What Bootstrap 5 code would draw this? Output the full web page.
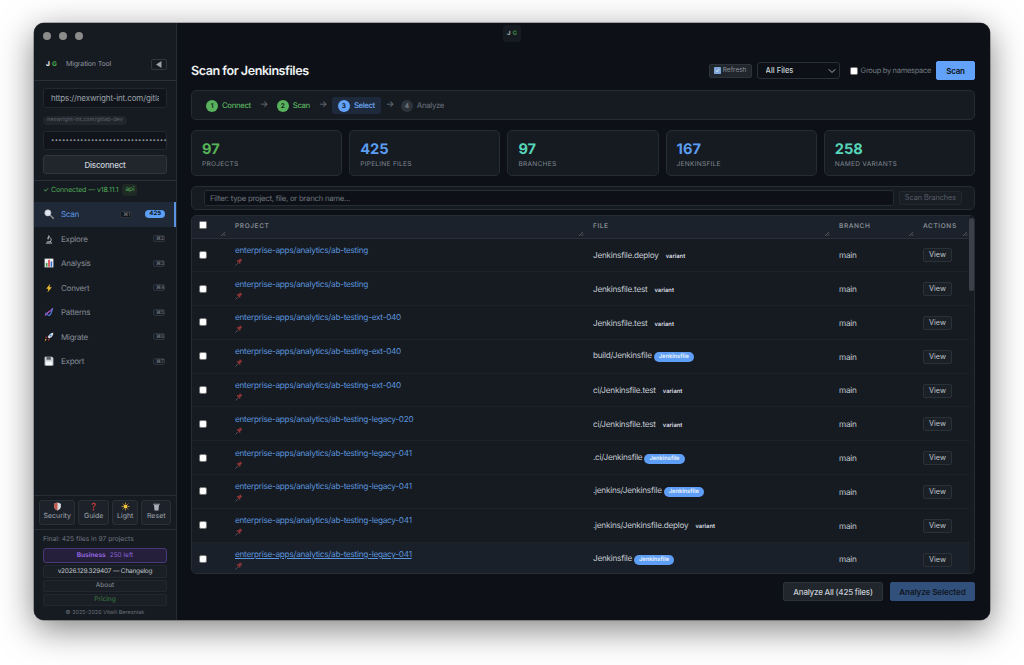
<!doctype html>
<html lang="en">
<head>
<meta charset="utf-8">
<title>Migration Tool</title>
<link href="https://cdn.jsdelivr.net/npm/bootstrap@5.3.0/dist/css/bootstrap.min.css" rel="stylesheet">
<style>
html,body{height:100%;background:#fff;overflow:hidden}
body{font-family:Inter,"Liberation Sans",sans-serif;font-size:8px;padding:23px 34px 45px;color:#c9d1d9;text-rendering:geometricPrecision}
.appwin{height:597px;border-radius:10px;overflow:hidden;box-shadow:0 9px 34px rgba(0,0,0,.5),0 0 0 .5px rgba(0,0,0,.5);background:#0d1117;position:relative}
.side{width:143px;flex:none;background:#161b22;border-right:1px solid #262c35}
.side>*{flex-shrink:0}
.dots{height:27px;padding:9px 0 0 9px}
.dots i{width:8px;height:8px;border-radius:50%;background:#8b8b8b}
.brandrow{height:31px;padding:0 9px 1px 9px;border-bottom:1px solid #2a303a;font-size:7px;letter-spacing:-.15px;color:#9198a1}
.logo{font-size:6.5px;font-weight:800;letter-spacing:.4px;width:23px;padding-left:3px}
.logo b{color:#3fa04a;font-weight:800}
.logo span{color:#eee}
.collapse-btn{width:16px;height:11px;border:1px solid #30363f;border-radius:2px;color:#9ba2aa}
.connbox{padding:7px 9px 6px;border-bottom:1px solid #2a303a}
.field-d{display:block;width:100%;background:#11151b;border:1px solid #22282f;border-radius:3px;color:#9ca3ab;font-size:8px;letter-spacing:-.15px;height:20px;padding:0 7px;white-space:nowrap;overflow:hidden;box-shadow:none}
.field-d:focus{background:#11151b;color:#9ca3ab}
.chip{display:block;width:fit-content;background:#21262d;color:#5b626b;font-size:5.5px;padding:0 4px;border-radius:6px;margin:8px 0 6px;line-height:9px;height:9px}
.pwd{letter-spacing:.25px;font-size:6px;color:#8a9099;height:19px;line-height:17px;padding:0 7px}
.disc{width:100%;height:19px;padding:0;margin-top:5px;background:#21262d;border:1px solid #30363d;color:#c9d1d9;font-size:8px;letter-spacing:-.2px;font-weight:500;border-radius:3px}
.connst{height:21px;padding:0 0 3px 9px;color:#4fa754;font-size:7px;letter-spacing:-.1px;gap:3px}
.connst span{background:#1f2a24;color:#4fa754;padding:1px 3px;border-radius:3px;font-size:6.5px;margin-left:1px}
.navlist{padding:0}
.navit{height:24.5px;padding:0 9px 0 10px;font-size:8px;letter-spacing:-.25px;color:#858c95;gap:7px;border-right:2px solid transparent}
.navit svg{width:10px;height:10px;flex:none}
.navit.on{background:#1f2937;color:#5d99e6;border-right-color:#5a94e0}
.kbd-k{margin-left:auto;border:1px solid #2c323a;background:#1a1f26;font-size:5px;letter-spacing:0;color:#767d86;border-radius:2px;padding:0 2px;line-height:6px;width:12px;text-align:center;height:7px}
.navit.on .kbd-k{background:#14181d;margin-right:6px}
.cnt{background:#5c9ff5;color:#0d1117;font-size:6px;letter-spacing:0;font-weight:700;border-radius:6px;padding:1px 4px;line-height:6px}
.toolsrow{padding:4px 5px 4px;gap:3px;border-top:1px solid #262c35;border-bottom:1px solid #262c35}
.toolbtn{height:25px;background:#1d222a;border:1px solid #2a3038;border-radius:3px;color:#a0a7af;font-size:7px;flex-direction:column;line-height:8px;padding:1px 0 0}
.toolbtn svg{width:9px;height:9px;margin-bottom:1px}
.sidefoot{padding:4px 9px 3px;gap:2px}
.finalt{color:#6f7680;font-size:6.7px;height:10px;margin-bottom:2px}
.plan{height:15px;background:#261f3c;border:1px solid #483a76;border-radius:3px;color:#8a63d2;font-size:6.5px;gap:4px}
.plan b{color:#8f63dc}
.linkb{height:13px;border:1px solid #232830;background:#1a1f26;border-radius:2px;font-size:6.5px;color:#8b929a}
.linkb.slim{height:12px}
.linkb.ver{color:#c0c6cc;letter-spacing:-.2px}
.linkb.pri{color:#3f7f45}
.copyr{color:#6a7078;font-size:5.5px;line-height:8px;margin-top:1px;text-align:center}
.mainp{min-width:0;padding:38px 15px 19px 14px;gap:10px;background:#0d1117}
.floatlogo{position:absolute;left:469px;top:2px;width:18px;height:17px;border-radius:3px;background:#161b22;font-size:6px;font-weight:800;color:#9aa}
.floatlogo b{color:#357a3c;font-weight:800;margin-left:2px}
.htop{height:19px}
.htitle{font-size:12.6px;letter-spacing:-.48px;font-weight:600;color:#eef1f4;margin:2px 0 0}
.refr{height:14px;width:43px;background:#21262d;border:1px solid #2d333b;border-radius:2px;font-size:6.5px;color:#8b929a;gap:2px;padding:0;margin-right:5px}
.refr svg{width:7px;height:7px}
.sel-d{width:83px;height:17px;padding:0 0 0 8px;font-size:7.5px;background-color:#0d1117;border:1px solid #2a3038;color:#c9d1d9;border-radius:3px;font-weight:500;background-size:8px 8px;background-position:right 3px center;background-image:url("data:image/svg+xml,%3csvg xmlns='http://www.w3.org/2000/svg' viewBox='0 0 16 16'%3e%3cpath fill='none' stroke='%23aab' stroke-linecap='round' stroke-linejoin='round' stroke-width='2' d='m2 5 6 6 6-6'/%3e%3c/svg%3e")}
.grp{margin-left:10px;margin-right:5px;font-size:7.5px;letter-spacing:-.3px;color:#717880;gap:3px}
.chk-d{width:8px;height:8px;margin:0;border-radius:1.5px;background-color:#fff;border:1px solid #767676;flex:none}
.scanb{width:39px;height:19px;padding:0;background:#62a2fb;border:1px solid #62a2fb;border-radius:2px;color:#0d1117;font-size:8px;letter-spacing:-.2px;font-weight:600}
.panel-d{background:#161b22;border:1px solid #262c35;border-radius:5px}
.stepb{height:30px;padding-left:10px;font-size:7.8px;letter-spacing:-.4px}
.stp{height:17px;gap:4px;padding:1px 4px 0;font-weight:500;color:#58ad5c;border-radius:3px}
.stp i{width:12px;height:12px;border-radius:50%;background:#58b25c;color:#0d1117;font-size:6.5px;letter-spacing:0;font-style:normal;font-weight:600;text-align:center;line-height:12px}
.stp.cur{background:#1e2a3c;color:#6aa5f0;padding:1px 6px 0}
.stp.cur i{background:#62a2fb}
.stp.todo{color:#5f666f;margin-left:-2px}
.stp.todo i{background:#2d333b;color:#7d848c}
.arr{color:#6e757d;font-size:9px;width:18px;text-align:center;line-height:9px;margin-top:-1px}
.statgrid{gap:7px}
.statb{height:46px;padding:9px 10px 0;flex:1 1 0}
.statn{font-size:14.6px;font-weight:700;line-height:18px}
.statl{font-size:6.6px;color:#7f868e;letter-spacing:.25px;text-transform:uppercase;line-height:10px;margin-top:1px}
.cg{color:#56b356}.cb{color:#5a9df2}.ct{color:#56d4b8}
.filterb{height:24px;padding:0 12px}
.filt{flex:1;height:16px;background:#0d1117;border:1px solid #262c35;border-radius:3px;color:#6f767e;font-size:7.7px;letter-spacing:-.22px;padding:0 5px;line-height:15px;white-space:nowrap}
.sbr{width:63px;height:14px;margin-left:5px;padding:0;background:#1a1f26;border:1px solid #22272f;border-radius:2px;color:#585e66;font-size:7.3px;letter-spacing:-.05px}
.tblwrap{height:359px;overflow:hidden;position:relative}
.tbl-d{table-layout:fixed;width:778px;margin:0;--bs-table-bg:transparent;--bs-table-color:#c9d1d9;border-collapse:collapse}
.tbl-d th{height:22px;padding:1px 0 0 7px;background:#1c222b;font-size:6.5px;font-weight:600;letter-spacing:.6px;color:#848b93;text-transform:uppercase;border-bottom:1px solid #2a303a;position:relative;vertical-align:middle}
.tbl-d td{height:33.8px;padding:1px 0 0 7px;font-size:8.2px;letter-spacing:-.25px;border-bottom:1px solid #1d2229;vertical-align:middle;background:transparent;color:#c3cad1;line-height:1}
.tbl-d td.ckc,.tbl-d th.ckc{padding:0 0 0 7px}
.tbl-d th.ckc .chk-d{margin-top:-3px;display:block}
.grip{position:absolute;right:2px;bottom:2px;width:5px;height:4px}
.plink{color:#5b94dd;text-decoration:none;display:block;line-height:10px}
.hov{background:#1a2029}
.hov .plink{text-decoration:underline}
.pinic{width:8px;height:8px;display:block;margin-top:3px}
.tg-v{font-size:5.8px;letter-spacing:0;font-weight:600;color:#d7dbe0;margin-left:5px;vertical-align:0}
.tg-j{display:inline-block;background:#5e9ef6;color:#e8f1ff;font-size:5.8px;letter-spacing:-.05px;font-weight:600;border-radius:6px;padding:0 5px;line-height:10px;margin-left:2px;vertical-align:0}
.viewb{width:29px;height:14px;padding:0;background:#1b2027;border:1px solid #2b3139;border-radius:2px;color:#bcc3ca;font-size:7.3px;line-height:12px}
.sthumb{position:absolute;right:0;top:2px;width:5px;height:73px;background:#3b4149;border-radius:3px}
.ftbtn{height:19px;padding:0;border-radius:2px;font-size:8px;font-weight:500}
.anall{width:100px;background:#21262d;border:1px solid #2c323a;color:#c6ccd3;letter-spacing:-.2px}
.ansel{width:85px;background:#32507c;border:1px solid #32507c;color:#0f1620;margin-left:7px;font-weight:600;letter-spacing:-.05px}
</style>
</head>
<body>
<div class="appwin d-flex">
  <aside class="side d-flex flex-column">
    <div class="dots d-flex gap-1"><i class="d-block me-1"></i><i class="d-block me-1"></i><i class="d-block"></i></div>
    <div class="brandrow d-flex align-items-center">
      <div class="logo"><span>J</span> <b>G</b></div>
      <div class="flex-grow-1">Migration Tool</div>
      <div class="collapse-btn d-flex align-items-center justify-content-center"><svg width="6" height="7" viewBox="0 0 6 7"><path d="M5.5 0v7L0 3.5z" fill="#9ba2aa"/></svg></div>
    </div>
    <div class="connbox">
      <input class="form-control field-d" type="text" value="https://nexwright-int.com/gitlab-dev" aria-label="GitLab URL">
      <div class="chip">nexwright-int.com/gitlab-dev</div>
      <div class="field-d pwd">••••••••••••••••••••••••••••••••</div>
      <button class="btn disc" type="button">Disconnect</button>
    </div>
    <div class="connst d-flex align-items-center">✓ Connected — v18.11.1 <span>api</span></div>
    <nav class="navlist d-flex flex-column">
      <div class="navit on d-flex align-items-center"><svg viewBox="0 0 16 16"><path d="M10 10l5 5" stroke="#8a8a8a" stroke-width="2.4" stroke-linecap="round"/><circle cx="6.2" cy="6.2" r="5" fill="#dfe6ee" stroke="#aab" stroke-width="1"/></svg>Scan<span class="kbd-k">⌘1</span><span class="cnt">425</span></div>
      <div class="navit d-flex align-items-center"><svg viewBox="0 0 16 16"><path d="M3 14.5h10M5 12.5h6" stroke="#b5bcc4" stroke-width="1.6"/><path d="M7 2l2.5 1-2.5 6-2-1z" fill="#9aa2ab"/><path d="M9.5 5.5a4.5 4.5 0 0 1 .5 7" stroke="#ccd2d8" stroke-width="1.4" fill="none"/></svg>Explore<span class="kbd-k">⌘2</span></div>
      <div class="navit d-flex align-items-center"><svg viewBox="0 0 16 16"><rect x="1" y="1" width="14" height="14" fill="#eef0f2"/><rect x="3" y="8" width="2.5" height="6" fill="#2f9e44"/><rect x="6.8" y="3" width="2.5" height="11" fill="#d9363e"/><rect x="10.6" y="5.5" width="2.5" height="8.5" fill="#2b6cd4"/></svg>Analysis<span class="kbd-k">⌘3</span></div>
      <div class="navit d-flex align-items-center"><svg viewBox="0 0 16 16"><path d="M10 1L3.5 9h3.6L5.5 15l7-8.2H8.6z" fill="#f2c230"/></svg>Convert<span class="kbd-k">⌘4</span></div>
      <div class="navit d-flex align-items-center"><svg viewBox="0 0 16 16"><path d="M2 14C3 8 9 10 14 2" stroke="#b44fc9" stroke-width="2.2" fill="none"/><path d="M2 10c4 0 3 5 7 3s3-8 5-11" stroke="#4f7fe0" stroke-width="1.8" fill="none"/></svg>Patterns<span class="kbd-k">⌘5</span></div>
      <div class="navit d-flex align-items-center"><svg viewBox="0 0 16 16"><path d="M15 1c-4 .3-7 2.5-9 7l2.2 2.2c4.500-2 6.700-5 6.800-9.200z" fill="#d7dce2"/><circle cx="10.500" cy="5.500" r="1.500" fill="#3f7fd8"/><path d="M5 7L1.500 8.500 4 10zM9 11l-1.500 3.500L6 12z" fill="#d9363e"/><path d="M4.500 11.500L1 15l1-4z" fill="#f2a530"/></svg>Migrate<span class="kbd-k">⌘6</span></div>
      <div class="navit d-flex align-items-center"><svg viewBox="0 0 16 16"><path d="M1 1h12l2 2v12H1z" fill="#cdd2d8"/><rect x="4" y="1" width="7" height="5" fill="#5f6770"/><rect x="3" y="9" width="10" height="6" fill="#f5f6f7"/></svg>Export<span class="kbd-k">⌘7</span></div>
    </nav>
    <div class="toolsrow d-flex mt-auto">
      <div class="toolbtn d-flex align-items-center" style="width:37px"><svg viewBox="0 0 16 16"><path d="M8 1l6 2v5c0 3.500-3 6-6 7-3-1-6-3.500-6-7V3z" fill="#d9dcdf"/><path d="M8 1v14c-3-1-6-3.500-6-7V3z" fill="#c0584f"/></svg>Security</div>
      <div class="toolbtn d-flex align-items-center" style="width:31px"><svg viewBox="0 0 16 16"><path d="M4.500 5c0-5 7.500-5 7.500-.5 0 3-3.200 3-3.200 6H7c0-4 3-3.700 3-5.800 0-2-3.400-2-3.500.3z" fill="#d43a3a"/><circle cx="8" cy="13.500" r="1.600" fill="#d43a3a"/></svg>Guide</div>
      <div class="toolbtn d-flex align-items-center" style="width:27px"><svg viewBox="0 0 16 16"><circle cx="8" cy="8" r="3.500" fill="#f5c542"/><path d="M8 1v2.500M8 12.500V15M1 8h2.500M12.500 8H15M3 3l1.700 1.700M11.300 11.300L13 13M13 3l-1.700 1.700M4.700 11.300L3 13" stroke="#e8a93a" stroke-width="1.400"/></svg>Light</div>
      <div class="toolbtn d-flex align-items-center" style="width:30px"><svg viewBox="0 0 16 16"><path d="M2 3h12v2H2z" fill="#8d949c"/><path d="M3.500 5.500h9L11.500 15h-7z" fill="#a9afb6"/></svg>Reset</div>
    </div>
    <div class="sidefoot d-flex flex-column">
      <div class="finalt d-flex align-items-center">Final: 425 files in 97 projects</div>
      <div class="plan d-flex align-items-center justify-content-center"><b>Business</b> 250 left</div>
      <div class="linkb ver d-flex align-items-center justify-content-center">v2026.129.329407 — Changelog</div>
      <div class="linkb slim d-flex align-items-center justify-content-center">About</div>
      <div class="linkb slim pri d-flex align-items-center justify-content-center">Pricing</div>
      <div class="copyr">© 2025-2026 Vitalii Berezniak</div>
    </div>
  </aside>

  <main class="mainp flex-grow-1 d-flex flex-column">
    <div class="floatlogo d-flex align-items-center justify-content-center">J<b>G</b></div>
    <div class="htop d-flex align-items-center">
      <h1 class="htitle me-auto">Scan for Jenkinsfiles</h1>
      <button class="btn refr d-flex align-items-center justify-content-center" type="button"><svg viewBox="0 0 16 16"><rect width="16" height="16" rx="2" fill="#7ea6d8"/><path d="M4 8l3 3 5-6" stroke="#e8eef5" stroke-width="2" fill="none"/></svg>Refresh</button>
      <select class="form-select sel-d" aria-label="File filter"><option>All Files</option></select>
      <label class="grp d-flex align-items-center"><input class="form-check-input chk-d" type="checkbox">Group by namespace</label>
      <button class="btn scanb" type="button">Scan</button>
    </div>
    <div class="panel-d stepb d-flex align-items-center">
      <span class="stp d-flex align-items-center"><i>1</i>Connect</span><span class="arr">→</span>
      <span class="stp d-flex align-items-center"><i>2</i>Scan</span><span class="arr">→</span>
      <span class="stp cur d-flex align-items-center"><i>3</i>Select</span><span class="arr">→</span>
      <span class="stp todo d-flex align-items-center"><i>4</i>Analyze</span>
    </div>
    <div class="statgrid d-flex">
      <div class="panel-d statb"><div class="statn cg">97</div><div class="statl">Projects</div></div>
      <div class="panel-d statb"><div class="statn cb">425</div><div class="statl">Pipeline Files</div></div>
      <div class="panel-d statb"><div class="statn ct">97</div><div class="statl">Branches</div></div>
      <div class="panel-d statb"><div class="statn cb">167</div><div class="statl">Jenkinsfile</div></div>
      <div class="panel-d statb"><div class="statn ct">258</div><div class="statl">Named Variants</div></div>
    </div>
    <div class="panel-d filterb d-flex align-items-center" style="margin-bottom:-5px">
      <div class="filt">Filter: type project, file, or branch name...</div>
      <button class="btn sbr" type="button">Scan Branches</button>
    </div>
    <div class="panel-d tblwrap">
      <table class="table tbl-d">
        <colgroup><col style="width:36px"><col style="width:358px"><col style="width:246px"><col style="width:84px"><col style="width:54px"></colgroup>
        <thead><tr>
          <th class="ckc"><input class="form-check-input chk-d" type="checkbox" aria-label="all"><svg class="grip" viewBox="0 0 5 4"><path d="M0 4L4 0M2.500 4L4.500 2" stroke="#777" stroke-width=".6"/></svg></th>
          <th>Project<svg class="grip" viewBox="0 0 5 4"><path d="M0 4L4 0M2.500 4L4.500 2" stroke="#777" stroke-width=".6"/></svg></th>
          <th>File<svg class="grip" viewBox="0 0 5 4"><path d="M0 4L4 0M2.500 4L4.500 2" stroke="#777" stroke-width=".6"/></svg></th>
          <th>Branch<svg class="grip" viewBox="0 0 5 4"><path d="M0 4L4 0M2.500 4L4.500 2" stroke="#777" stroke-width=".6"/></svg></th>
          <th>Actions<svg class="grip" viewBox="0 0 5 4"><path d="M0 4L4 0M2.500 4L4.500 2" stroke="#777" stroke-width=".6"/></svg></th>
        </tr></thead>
        <tbody>
          <tr><td class="ckc"><input class="form-check-input chk-d" type="checkbox" aria-label="row"></td><td><a class="plink" href="#">enterprise-apps/analytics/ab-testing</a><svg class="pinic" viewBox="0 0 16 16"><path d="M9 1l6 6-2 1-3 3 .5 3L9 15 1.500 7.500 3 6l3 .5 3-3z" transform="translate(2 -1) scale(.85)" fill="#8a3434"/><path d="M1 15l5-5" stroke="#777" stroke-width="1.200"/></svg></td><td>Jenkinsfile.deploy <span class="tg-v">variant</span></td><td>main</td><td><button class="btn viewb" type="button">View</button></td></tr>
          <tr><td class="ckc"><input class="form-check-input chk-d" type="checkbox" aria-label="row"></td><td><a class="plink" href="#">enterprise-apps/analytics/ab-testing</a><svg class="pinic" viewBox="0 0 16 16"><path d="M9 1l6 6-2 1-3 3 .5 3L9 15 1.500 7.500 3 6l3 .5 3-3z" transform="translate(2 -1) scale(.85)" fill="#8a3434"/><path d="M1 15l5-5" stroke="#777" stroke-width="1.200"/></svg></td><td>Jenkinsfile.test <span class="tg-v">variant</span></td><td>main</td><td><button class="btn viewb" type="button">View</button></td></tr>
          <tr><td class="ckc"><input class="form-check-input chk-d" type="checkbox" aria-label="row"></td><td><a class="plink" href="#">enterprise-apps/analytics/ab-testing-ext-040</a><svg class="pinic" viewBox="0 0 16 16"><path d="M9 1l6 6-2 1-3 3 .5 3L9 15 1.500 7.500 3 6l3 .5 3-3z" transform="translate(2 -1) scale(.85)" fill="#8a3434"/><path d="M1 15l5-5" stroke="#777" stroke-width="1.200"/></svg></td><td>Jenkinsfile.test <span class="tg-v">variant</span></td><td>main</td><td><button class="btn viewb" type="button">View</button></td></tr>
          <tr><td class="ckc"><input class="form-check-input chk-d" type="checkbox" aria-label="row"></td><td><a class="plink" href="#">enterprise-apps/analytics/ab-testing-ext-040</a><svg class="pinic" viewBox="0 0 16 16"><path d="M9 1l6 6-2 1-3 3 .5 3L9 15 1.500 7.500 3 6l3 .5 3-3z" transform="translate(2 -1) scale(.85)" fill="#8a3434"/><path d="M1 15l5-5" stroke="#777" stroke-width="1.200"/></svg></td><td>build/Jenkinsfile<span class="tg-j">Jenkinsfile</span></td><td>main</td><td><button class="btn viewb" type="button">View</button></td></tr>
          <tr><td class="ckc"><input class="form-check-input chk-d" type="checkbox" aria-label="row"></td><td><a class="plink" href="#">enterprise-apps/analytics/ab-testing-ext-040</a><svg class="pinic" viewBox="0 0 16 16"><path d="M9 1l6 6-2 1-3 3 .5 3L9 15 1.500 7.500 3 6l3 .5 3-3z" transform="translate(2 -1) scale(.85)" fill="#8a3434"/><path d="M1 15l5-5" stroke="#777" stroke-width="1.200"/></svg></td><td>ci/Jenkinsfile.test <span class="tg-v">variant</span></td><td>main</td><td><button class="btn viewb" type="button">View</button></td></tr>
          <tr><td class="ckc"><input class="form-check-input chk-d" type="checkbox" aria-label="row"></td><td><a class="plink" href="#">enterprise-apps/analytics/ab-testing-legacy-020</a><svg class="pinic" viewBox="0 0 16 16"><path d="M9 1l6 6-2 1-3 3 .5 3L9 15 1.500 7.500 3 6l3 .5 3-3z" transform="translate(2 -1) scale(.85)" fill="#8a3434"/><path d="M1 15l5-5" stroke="#777" stroke-width="1.200"/></svg></td><td>ci/Jenkinsfile.test <span class="tg-v">variant</span></td><td>main</td><td><button class="btn viewb" type="button">View</button></td></tr>
          <tr><td class="ckc"><input class="form-check-input chk-d" type="checkbox" aria-label="row"></td><td><a class="plink" href="#">enterprise-apps/analytics/ab-testing-legacy-041</a><svg class="pinic" viewBox="0 0 16 16"><path d="M9 1l6 6-2 1-3 3 .5 3L9 15 1.500 7.500 3 6l3 .5 3-3z" transform="translate(2 -1) scale(.85)" fill="#8a3434"/><path d="M1 15l5-5" stroke="#777" stroke-width="1.200"/></svg></td><td>.ci/Jenkinsfile<span class="tg-j">Jenkinsfile</span></td><td>main</td><td><button class="btn viewb" type="button">View</button></td></tr>
          <tr><td class="ckc"><input class="form-check-input chk-d" type="checkbox" aria-label="row"></td><td><a class="plink" href="#">enterprise-apps/analytics/ab-testing-legacy-041</a><svg class="pinic" viewBox="0 0 16 16"><path d="M9 1l6 6-2 1-3 3 .5 3L9 15 1.500 7.500 3 6l3 .5 3-3z" transform="translate(2 -1) scale(.85)" fill="#8a3434"/><path d="M1 15l5-5" stroke="#777" stroke-width="1.200"/></svg></td><td>.jenkins/Jenkinsfile<span class="tg-j">Jenkinsfile</span></td><td>main</td><td><button class="btn viewb" type="button">View</button></td></tr>
          <tr><td class="ckc"><input class="form-check-input chk-d" type="checkbox" aria-label="row"></td><td><a class="plink" href="#">enterprise-apps/analytics/ab-testing-legacy-041</a><svg class="pinic" viewBox="0 0 16 16"><path d="M9 1l6 6-2 1-3 3 .5 3L9 15 1.500 7.500 3 6l3 .5 3-3z" transform="translate(2 -1) scale(.85)" fill="#8a3434"/><path d="M1 15l5-5" stroke="#777" stroke-width="1.200"/></svg></td><td>.jenkins/Jenkinsfile.deploy <span class="tg-v">variant</span></td><td>main</td><td><button class="btn viewb" type="button">View</button></td></tr>
          <tr class="hov"><td class="ckc"><input class="form-check-input chk-d" type="checkbox" aria-label="row"></td><td><a class="plink" href="#">enterprise-apps/analytics/ab-testing-legacy-041</a><svg class="pinic" viewBox="0 0 16 16"><path d="M9 1l6 6-2 1-3 3 .5 3L9 15 1.500 7.500 3 6l3 .5 3-3z" transform="translate(2 -1) scale(.85)" fill="#8a3434"/><path d="M1 15l5-5" stroke="#777" stroke-width="1.200"/></svg></td><td>Jenkinsfile<span class="tg-j">Jenkinsfile</span></td><td>main</td><td><button class="btn viewb" type="button">View</button></td></tr>
        </tbody>
      </table>
      <div class="sthumb"></div>
    </div>
    <div class="d-flex justify-content-end" style="margin-top:-2px">
      <button class="btn ftbtn anall" type="button">Analyze All (425 files)</button>
      <button class="btn ftbtn ansel" type="button">Analyze Selected</button>
    </div>
  </main>
</div>
<script src="https://cdn.jsdelivr.net/npm/bootstrap@5.3.0/dist/js/bootstrap.bundle.min.js"></script>
</body>
</html>
